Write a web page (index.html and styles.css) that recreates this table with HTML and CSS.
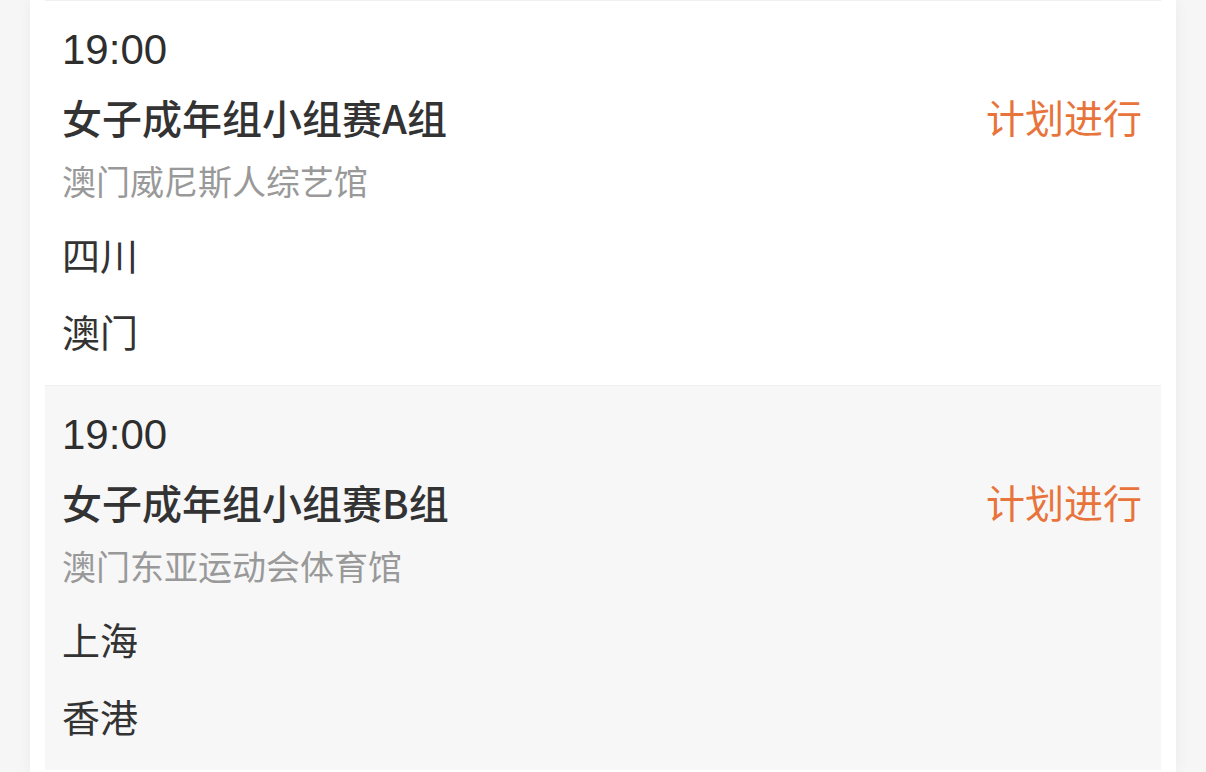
FILE: index.html
```html
<!DOCTYPE html>
<html>
<head>
    <meta charset="UTF-8" />
    <meta name="viewport" content="width=device-width, initial-scale=1.0">
    <link rel="stylesheet" href="styles.css">
</head>
<body>

    <main class="schedule">

        <div class="match">
            <div class="match-time">19:00</div>
            <div class="match-head">
                <span class="match-title">女子成年组小组赛A组</span>
                <span class="match-status">计划进行</span>
            </div>
            <div class="match-venue">澳门威尼斯人综艺馆</div>
            <div class="match-team">四川</div>
            <div class="match-team">澳门</div>
        </div>

        <div class="match">
            <div class="match-time">19:00</div>
            <div class="match-head">
                <span class="match-title">女子成年组小组赛B组</span>
                <span class="match-status">计划进行</span>
            </div>
            <div class="match-venue">澳门东亚运动会体育馆</div>
            <div class="match-team">上海</div>
            <div class="match-team">香港</div>
        </div>

    </main>

</body>
</html>
```

FILE: styles.css
```css
* {
    margin: 0;
    padding: 0;
    box-sizing: border-box;
}

body {
    background: #f6f6f6;
    font-family: "Liberation Sans", "Noto Sans CJK SC", sans-serif;
    color: #333;
    overflow: hidden;
}

.schedule {
    margin: 0 30px;
    padding: 0 15px;
    min-height: 772px;
    background: #fff;
    box-shadow: 0 0 14px rgba(0, 0, 0, .05);
}

.match {
    height: 385px;
    padding: 21px 19px 0 17px;
    border-top: 1px solid #f0f0f0;
}

.match:nth-child(even) {
    background: #f7f7f8;
}

.match-time {
    font-size: 42px;
    line-height: 56px;
    color: #2e2e2e;
}

.match-head {
    margin-top: 11px;
    display: flex;
    align-items: center;
    justify-content: space-between;
    line-height: 56px;
}

.match-title {
    font-family: "Noto Sans CJK SC", sans-serif;
    font-size: 40px;
    font-weight: 500;
    padding-bottom: 5px;
}

.match-status {
    font-size: 39px;
    color: #e8743b;
}

.match-venue {
    margin-top: 8px;
    font-size: 34px;
    line-height: 50px;
    color: #999;
}

.match-team {
    margin-top: 21px;
    font-size: 38px;
    line-height: 56px;
}
```
